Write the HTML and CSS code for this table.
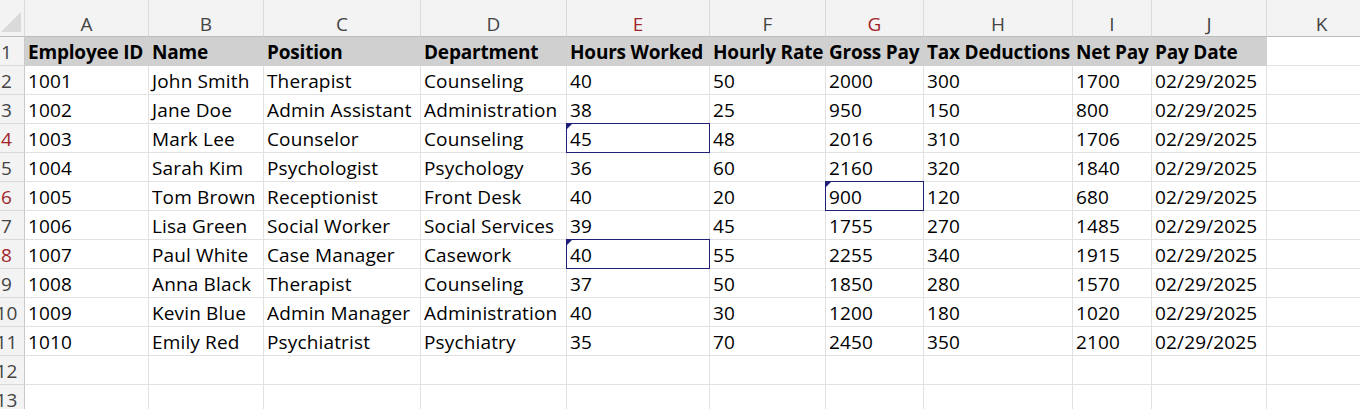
FILE: index.html
```html
<!DOCTYPE html>
<html lang="en">
<head>
<meta charset="utf-8">
<title>Payroll</title>
<link rel="stylesheet" href="styles.css">
</head>
<body>
<div class="sheet">
  <div class="hd corner"><svg class="corner-tri" width="22" height="22" viewBox="0 0 22 22"><polygon points="21,1 21,21 1,21" fill="#dadada"/></svg></div>
  <div class="hd col">A</div><div class="hd col">B</div><div class="hd col">C</div><div class="hd col">D</div><div class="hd col sel">E</div><div class="hd col">F</div><div class="hd col sel">G</div><div class="hd col">H</div><div class="hd col">I</div><div class="hd col">J</div><div class="hd col">K</div>

  <div class="rh"><span>1</span></div>
  <div class="c t">Employee ID</div><div class="c t">Name</div><div class="c t">Position</div><div class="c t">Department</div><div class="c t">Hours Worked</div><div class="c t">Hourly Rate</div><div class="c t">Gross Pay</div><div class="c t">Tax Deductions</div><div class="c t">Net Pay</div><div class="c t">Pay Date</div><div class="c"></div>

  <div class="rh"><span>2</span></div>
  <div class="c">1001</div><div class="c">John Smith</div><div class="c">Therapist</div><div class="c">Counseling</div><div class="c">40</div><div class="c">50</div><div class="c">2000</div><div class="c">300</div><div class="c">1700</div><div class="c">02/29/2025</div><div class="c"></div>

  <div class="rh"><span>3</span></div>
  <div class="c">1002</div><div class="c">Jane Doe</div><div class="c">Admin Assistant</div><div class="c">Administration</div><div class="c">38</div><div class="c">25</div><div class="c">950</div><div class="c">150</div><div class="c">800</div><div class="c">02/29/2025</div><div class="c"></div>

  <div class="rh sel"><span>4</span></div>
  <div class="c">1003</div><div class="c">Mark Lee</div><div class="c">Counselor</div><div class="c">Counseling</div><div class="c mark">45</div><div class="c">48</div><div class="c">2016</div><div class="c">310</div><div class="c">1706</div><div class="c">02/29/2025</div><div class="c"></div>

  <div class="rh"><span>5</span></div>
  <div class="c">1004</div><div class="c">Sarah Kim</div><div class="c">Psychologist</div><div class="c">Psychology</div><div class="c">36</div><div class="c">60</div><div class="c">2160</div><div class="c">320</div><div class="c">1840</div><div class="c">02/29/2025</div><div class="c"></div>

  <div class="rh sel"><span>6</span></div>
  <div class="c">1005</div><div class="c">Tom Brown</div><div class="c">Receptionist</div><div class="c">Front Desk</div><div class="c">40</div><div class="c">20</div><div class="c mark">900</div><div class="c">120</div><div class="c">680</div><div class="c">02/29/2025</div><div class="c"></div>

  <div class="rh"><span>7</span></div>
  <div class="c">1006</div><div class="c">Lisa Green</div><div class="c">Social Worker</div><div class="c">Social Services</div><div class="c">39</div><div class="c">45</div><div class="c">1755</div><div class="c">270</div><div class="c">1485</div><div class="c">02/29/2025</div><div class="c"></div>

  <div class="rh sel"><span>8</span></div>
  <div class="c">1007</div><div class="c">Paul White</div><div class="c">Case Manager</div><div class="c">Casework</div><div class="c mark">40</div><div class="c">55</div><div class="c">2255</div><div class="c">340</div><div class="c">1915</div><div class="c">02/29/2025</div><div class="c"></div>

  <div class="rh"><span>9</span></div>
  <div class="c">1008</div><div class="c">Anna Black</div><div class="c">Therapist</div><div class="c">Counseling</div><div class="c">37</div><div class="c">50</div><div class="c">1850</div><div class="c">280</div><div class="c">1570</div><div class="c">02/29/2025</div><div class="c"></div>

  <div class="rh"><span>10</span></div>
  <div class="c">1009</div><div class="c">Kevin Blue</div><div class="c">Admin Manager</div><div class="c">Administration</div><div class="c">40</div><div class="c">30</div><div class="c">1200</div><div class="c">180</div><div class="c">1020</div><div class="c">02/29/2025</div><div class="c"></div>

  <div class="rh"><span>11</span></div>
  <div class="c">1010</div><div class="c">Emily Red</div><div class="c">Psychiatrist</div><div class="c">Psychiatry</div><div class="c">35</div><div class="c">70</div><div class="c">2450</div><div class="c">350</div><div class="c">2100</div><div class="c">02/29/2025</div><div class="c"></div>

  <div class="rh"><span>12</span></div>
  <div class="c"></div><div class="c"></div><div class="c"></div><div class="c"></div><div class="c"></div><div class="c"></div><div class="c"></div><div class="c"></div><div class="c"></div><div class="c"></div><div class="c"></div>

  <div class="rh"><span>13</span></div>
  <div class="c"></div><div class="c"></div><div class="c"></div><div class="c"></div><div class="c"></div><div class="c"></div><div class="c"></div><div class="c"></div><div class="c"></div><div class="c"></div><div class="c"></div>
</div>
</body>
</html>
```

FILE: styles.css
```css
html, body {
  margin: 0;
  padding: 0;
  background: #ffffff;
  overflow: hidden;
}

.sheet {
  display: grid;
  grid-template-columns: 25px 124px 115px 157px 146px 143px 116px 98px 149px 79px 115px 110px;
  grid-template-rows: 37px repeat(13, 29px);
  font-family: "Open Sans", "Liberation Sans", sans-serif;
  font-size: 19px;
  color: #000;
  width: 1377px;
}

.hd {
  background: #f3f3f3;
  border-right: 1px solid #dadada;
  border-bottom: 1px solid #bcbcbc;
  box-sizing: border-box;
  color: #444444;
}

.col {
  display: flex;
  align-items: flex-end;
  justify-content: center;
  line-height: 24px;
}

.col.sel {
  color: #a1262b;
}

.corner {
  position: relative;
}

.corner-tri {
  position: absolute;
  left: 0;
  bottom: 3px;
}

.rh {
  background: #f3f3f3;
  border-right: 1px solid #c9c9c9;
  border-bottom: 1px solid #dadada;
  box-sizing: border-box;
  color: #444444;
  display: flex;
  align-items: center;
  padding-top: 2px;
}

.rh span {
  width: 13px;
  display: flex;
  justify-content: center;
  white-space: nowrap;
}

.rh.sel {
  color: #a1262b;
}

.c {
  border-right: 1px solid #e1e1e1;
  border-bottom: 1px solid #e1e1e1;
  box-sizing: border-box;
  display: flex;
  align-items: center;
  padding-left: 3px;
  padding-top: 2px;
  white-space: nowrap;
  position: relative;
  letter-spacing: 0.15px;
}

.c.t {
  background: #d0d0d0;
  border-color: #d0d0d0;
  font-weight: 700;
  letter-spacing: -0.2px;
}

.mark::before {
  content: "";
  position: absolute;
  top: -1px;
  left: -1px;
  right: -1px;
  bottom: -1px;
  border: 1px solid #1f1f78;
}

.mark::after {
  content: "";
  position: absolute;
  top: 0;
  left: 0;
  width: 0;
  height: 0;
  border-top: 5px solid #1f1f78;
  border-right: 5px solid transparent;
}
```
